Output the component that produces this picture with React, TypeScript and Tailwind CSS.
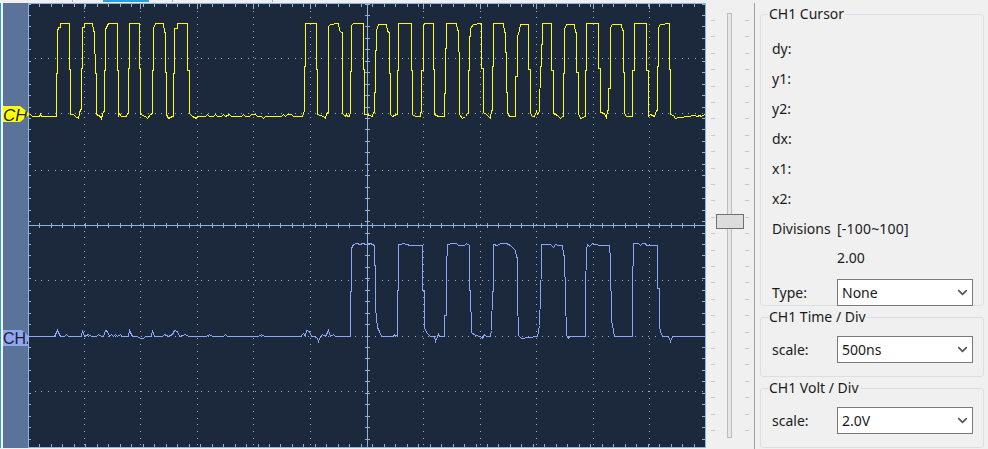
import React from 'react'
import { ChevronDown } from 'lucide-react'

const XS = [84, 140, 197, 253, 310, 423, 480, 536, 593, 649]
const YS = [58, 113, 170, 280, 336, 391]
const cols = Array.from({ length: 59 }, (_, i) => 28 + i * 11.475)
const rows = Array.from({ length: 39 }, (_, i) => 3.5 + i * 11.45)

const yellow: number[][] = [
  [30,114],[32,116],[39,116],[40,114],[41,116],[56.5,116],[56.5,73],[57.5,73],[57.5,29],[58.5,29],[58.5,27],[60,27],[60,23.5],[69.5,23.5],[69.5,69],[70.5,69],[70.5,114],[73,114],[75,116],[78,118],[79,113],[80,109],[81,109],[81.5,68],[82.5,68],[82.5,27],[84,27],[84,23.5],[92,23.5],[93,30],[94.5,32],[95,73],[96,73],[96,114],[98,115],[100,116.5],[101,118],[102,114],[103,111],[104,111],[104,70],[105,70],[105,29],[106,27],[108,23.5],[117.5,23.5],[117.5,70],[118.5,70],[118.5,116],[119.5,113],[121,116],[126,116],[127,113],[128,113],[128,68],[129.5,68],[129.5,23.5],[139.5,23.5],[139.5,68],[140.5,68],[140.5,114],[145,116],[147,118.5],[150,114],[152,113],[152.5,70],[153,70],[153,28],[155,23.5],[163,23.5],[164,32],[165,32],[165,72],[166,72],[166,114],[168,118],[172,116],[173.5,116],[173.5,73],[174.5,73],[174.5,28],[177,28],[177,23.5],[187.5,23.5],[187.5,70],[189,70],[189,113],[192,116],[196,118],[197,116],[205,116],[207,114],[209,116],[213,116],[215,114],[217,116],[221,116],[223,114],[225,116],[229,114],[231,116],[241,116],[243,114],[245,116],[249,116],[251,114],[255,114],[257,116],[261,116],[263,118],[265,116],[281,116],[283,114],[285,116],[287,114],[291,114],[293,116],[302.5,116],[304,110],[304.5,110],[304.5,66],[305.5,66],[305.5,23.5],[316.5,23.5],[316.5,69],[317.5,69],[317.5,114],[320,115],[323,116.5],[325,118],[326,114],[327.5,112],[328,112],[328,70],[328.5,70],[328.5,26],[330,24],[338,23.5],[339,30],[341,32],[342,32],[342,73],[342.5,73],[342.5,113],[344,115],[345,116],[346.5,114],[347,116],[349,116],[350,112],[350.5,112],[350.5,71],[351,71],[351,25],[353,23.5],[363.5,23.5],[363.5,69],[364.5,69],[364.5,114],[367,114],[369,115],[372,116],[373,112],[374,112],[374,92],[375,92],[375,50],[376,50],[376,30],[378,24],[386.5,24],[387.5,30],[388.5,32],[389,32],[389,73],[390,73],[390,114],[392,116],[396,114],[397.5,114],[397.5,70],[398.5,70],[398.5,23.5],[410,23.5],[411.5,23.5],[411.5,70],[412.5,70],[412.5,114],[415,116],[420,116],[420,112],[421,112],[421,70],[423,70],[423,26],[424,23.5],[433.5,23.5],[433.5,69],[434.5,69],[434.5,114],[438,116],[444.5,116],[444.5,93],[445.5,93],[445.5,48],[446.5,48],[446.5,23.5],[456.5,23.5],[457.5,30],[458.5,30],[459,72],[459.5,72],[459.5,114],[462,118],[465,116],[467,113],[468,113],[468,70],[469,70],[469,36],[470,36],[470,28],[473,24],[481.5,23.5],[481.5,68],[483,68],[483,112],[486,114],[490,118],[491.5,110],[492.5,110],[492.5,66],[493.5,66],[493.5,23.5],[503,23.5],[504.5,32],[505.5,32],[505.5,52],[506.5,52],[506.5,92],[507.5,92],[507.5,112],[509.5,116],[515.5,116],[515.5,76],[517,76],[517,36],[519,30],[520,24],[528.5,24],[528.5,69],[530,69],[530,113],[532,116],[534,116],[536,111],[537,114],[539,111],[540,66],[541,66],[541,44],[542,44],[542,23.5],[551,23.5],[551,70],[553,70],[553,113],[557,115],[560,118],[562,116],[563,116],[563,73],[564.5,73],[564.5,29],[566,24],[574,24],[575,32],[576.5,32],[576.5,72],[578,72],[578,113],[580,118],[585,116],[585.5,116],[585.5,70],[586.5,70],[586.5,23.5],[598.5,23.5],[598.5,68],[600,68],[600,112],[604,113],[606,118],[607.5,110],[608.5,110],[608.5,88],[610,88],[610,27],[612,24],[621.5,24],[622,30],[623.5,30],[623.5,72],[624.5,72],[624.5,113],[626.5,116],[632.5,116],[632.5,70],[634,70],[634,23.5],[646.5,23.5],[646.5,70],[648,70],[648,116],[650,114],[654,116],[656,110],[657.5,110],[657.5,66],[658,66],[658,27],[660,24],[669,23.5],[669,69],[670,69],[670,114],[673,115],[675,118],[678,117],[690,116],[691,115],[694,115],[697,116.5],[699,115],[701,116],[704,114],[705,115],
]

const blue: number[][] = [
  [29,336],[54,336],[55.5,334],[57.5,330.5],[60.5,336],[64,336],[66,334.5],[68,336],[81,336],[82.5,330],[84,336],[88,334],[91,336],[96,336],[98,334],[101,336],[103,336],[105,330],[107,331],[109,336],[111,334],[113,336],[115,334],[117,336],[120,334],[122,336],[128,336],[129.5,330],[132,336],[137,336],[140.5,338],[143,338],[145,336],[151.5,336],[152.5,330],[154,336],[162,336],[164,334],[168,336],[172,334],[174,330],[177,331],[179,336],[185,334],[188,336],[206,336],[209,334],[212,336],[223,336],[225,334],[227,336],[258,336],[261,334],[264,336],[300,336],[303,333],[305,336],[306,330],[309,331],[311,336],[314,336],[317,338],[318,341],[320,336],[322,334],[325,336],[328,330],[330,336],[333,334],[335,336],[350.5,336],[350.5,291],[351.5,291],[351.5,248],[353,244],[356,243],[360,244],[362,243],[366,244],[370,243],[374.5,245],[374.5,265],[375.5,265],[375.5,307],[377,327],[379,331],[381,336],[393,336],[394,334],[397,336],[397,290],[398.5,290],[398.5,244],[400,244],[403,243],[406,244],[410,245],[422.5,245],[422.5,290],[424,290],[424,327],[426,332],[430,336],[434,336],[435,341],[437,336],[438,334],[439,336],[444.5,336],[444.5,315],[446,315],[446.5,267],[447,244],[449,244],[450,243],[456,243],[458,245],[464,245],[466,243],[469,245],[469,290],[470,290],[471,332],[475,335],[480,336],[482,338],[484,334],[486,336],[490,336],[491,330],[492,291],[493,291],[493,244],[497,245],[500,243],[506,243],[510,245],[515,250],[516,257],[517,257],[517.5,296],[518,335],[521,338],[537,336],[539,325],[540,294],[541,265],[541.5,244],[550,244],[553,247],[555,244],[558,245],[562,245],[563,254],[564,256],[565,296],[566,335],[568,338],[569,336],[585,336],[585,292],[586,249],[587,244],[589,246],[592,243],[599,245],[609,245],[610.7,260],[611.7,320],[613,330],[614,336],[632.7,336],[632.7,290],[633.7,243],[638,243],[640,245],[642,243],[645,243],[646.7,245],[657.7,245],[657.7,288],[659,288],[659,327],[661.7,334],[663,336],[668,336],[670,341],[672.3,336],[705,336],
]

const pts = (list: number[][]) => list.map(([x, y]) => `${Math.floor(x) + 0.5},${Math.floor(y) + 0.5}`).join(' ')
const sliderTicks = Array.from({ length: 26 }, (_, i) => 20 + i * 16.4)

function Scope() {
  return (
    <svg width="678" height="445" viewBox="28 3 678 445" className="block shrink-0 bg-[#1c283b]" shapeRendering="crispEdges">
      {XS.map((x) => (
        <line key={x} x1={x + 0.5} x2={x + 0.5} y1="4" y2="447" stroke="#8fb3d9" strokeWidth="1" strokeDasharray="1 5.67" />
      ))}
      {YS.map((y) => (
        <line key={y} x1="28" x2="705" y1={y + 0.5} y2={y + 0.5} stroke="#8fb3d9" strokeWidth="1" strokeDasharray="1 5.67" />
      ))}
      {cols.map((x) => (
        <g key={x} stroke="#8fb3d9">
          <line x1={Math.round(x) + 0.5} x2={Math.round(x) + 0.5} y1="3" y2="7" />
          <line x1={Math.round(x) + 0.5} x2={Math.round(x) + 0.5} y1="223" y2="228" />
          <line x1={Math.round(x) + 0.5} x2={Math.round(x) + 0.5} y1="444" y2="448" />
        </g>
      ))}
      {rows.map((y) => (
        <g key={y} stroke="#8fb3d9">
          <line x1="28" x2="31" y1={Math.round(y) + 0.5} y2={Math.round(y) + 0.5} />
          <line x1="365" x2="370" y1={Math.round(y) + 0.5} y2={Math.round(y) + 0.5} />
          <line x1="702" x2="705" y1={Math.round(y) + 0.5} y2={Math.round(y) + 0.5} />
        </g>
      ))}
      <g stroke="#8fb3d9" fill="none">
        <rect x="28.5" y="3.5" width="676.5" height="444" />
        <line x1="28" x2="705" y1="225.5" y2="225.5" />
        <line x1="367.5" x2="367.5" y1="3" y2="447" />
        {[...XS, 367].map((x) => (
          <line key={x} x1={x + 0.5} x2={x + 0.5} y1="3" y2="9" />
        ))}
      </g>
      <polyline points={pts(yellow)} fill="none" stroke="#ffff00" strokeWidth="1" />
      <polyline points={pts(blue)} fill="none" stroke="#8ea6f5" strokeWidth="1" />
    </svg>
  )
}

function Group({ title, className, children }: { title: string; className: string; children: React.ReactNode }) {
  return (
    <div className={`relative w-[224px] shrink-0 rounded-[3px] border border-[#d8e0e6] ${className}`}>
      <span className="absolute left-[7px] top-[-10px] bg-[#f0f0f0] px-px text-[14px] leading-[17px]">{title}</span>
      {children}
    </div>
  )
}

function Select({ value }: { value: string }) {
  return (
    <div className="flex h-[27px] w-[136px] items-center justify-between border border-[#7a7a7a] bg-white pl-[4px] pr-[2px]">
      <span>{value}</span>
      <ChevronDown size={15} strokeWidth={2.6} className="text-[#555]" />
    </div>
  )
}

export default function App() {
  return (
    <div className="flex h-[449px] w-[988px] flex-col overflow-hidden bg-[#f0f0f0] text-[14px] leading-[17px] text-[#1a1a1a] [font-family:'Noto_Sans','Open_Sans',sans-serif]">
      {/* tab strip cut off by the crop */}
      <div className="flex h-[3px] shrink-0 bg-[#f0f0f0]">
        <div className="ml-[72px] h-[2px] w-px bg-[#a8a8a8]" />
        <div className="ml-[30px] h-[2px] w-[46px] bg-[#2b9be3]" />
        <div className="ml-[23px] h-[2px] w-px bg-[#a8a8a8]" />
        <div className="ml-[99px] h-[2px] w-px bg-[#a8a8a8]" />
      </div>
      <div className="relative flex min-h-0 flex-1">
        <div className="mb-[1px] w-[28px] shrink-0 border-l-[1px] border-[#2b9be3] bg-[#f4f6f8] pl-[2px]">
          <div className="h-full w-full bg-[#5b7299]" />
        </div>
        <Scope />

        {/* channel markers sit over the left band */}
        <div className="absolute left-[3px] top-[103px] h-[16px] w-[27px] overflow-hidden bg-[#ffff00] [clip-path:polygon(0_0,17px_0,27px_8px,17px_16px,0_16px)]">
          <div className="w-[25px] overflow-hidden pt-px text-[17px] leading-[17px] whitespace-nowrap text-[#222] italic [font-family:'Liberation_Sans',sans-serif]">CH1</div>
        </div>
        <div className="absolute left-[3px] top-[327px] h-[16px] w-[27px] overflow-hidden bg-[#8ea6f5] [clip-path:polygon(0_0,19px_0,25px_5px,25px_16px,0_16px)]">
          <div className="w-[25px] overflow-hidden pt-px text-[16px] leading-[16px] whitespace-nowrap text-[#222] [font-family:'Liberation_Sans',sans-serif]">CH2</div>
        </div>

        {/* slider */}
        <div className="relative w-[49px] shrink-0 border-r border-[#a0a0a0]">
          <div className="absolute left-[21px] top-[10px] h-[425px] w-[5px] border border-[#bcbcbc] bg-[#e7e7e7]" />
          {sliderTicks.map((y) => (
            <React.Fragment key={y}>
              <div className="absolute left-[5px] h-px w-[4px] bg-[#c8c8c8]" style={{ top: y - 3 }} />
              <div className="absolute left-[39px] h-px w-[4px] bg-[#c8c8c8]" style={{ top: y - 3 }} />
            </React.Fragment>
          ))}
          <div className="absolute left-[10px] top-[211px] h-[15px] w-[28px] border border-[#707070] bg-[#dcdcdc]" />
        </div>

        {/* right side panels */}
        <div className="flex flex-col pl-[5px] pt-[11px]">
          <Group title="CH1 Cursor" className="h-[292px]">
            <div className="flex flex-col pl-[11px] pt-[25px]">
              {['dy:', 'y1:', 'y2:', 'dx:', 'x1:', 'x2:'].map((t) => (
                <div key={t} className="h-[30px]">{t}</div>
              ))}
              <div className="flex h-[29px]">
                <span className="w-[65px]">Divisions</span>
                <span className="tracking-[0.2px]">[-100~100]</span>
              </div>
              <div className="h-[30px] pl-[65px]">2.00</div>
              <div className="flex items-center">
                <span className="w-[65px]">Type:</span>
                <Select value="None" />
              </div>
            </div>
          </Group>
          <Group title="CH1 Time / Div" className="mt-[11px] h-[60px]">
            <div className="flex items-center pl-[11px] pt-[18px]">
              <span className="w-[65px]">scale:</span>
              <Select value="500ns" />
            </div>
          </Group>
          <Group title="CH1 Volt / Div" className="mt-[11px] h-[60px]">
            <div className="flex items-center pl-[11px] pt-[18px]">
              <span className="w-[65px]">scale:</span>
              <Select value="2.0V" />
            </div>
          </Group>
        </div>
      </div>
    </div>
  )
}
